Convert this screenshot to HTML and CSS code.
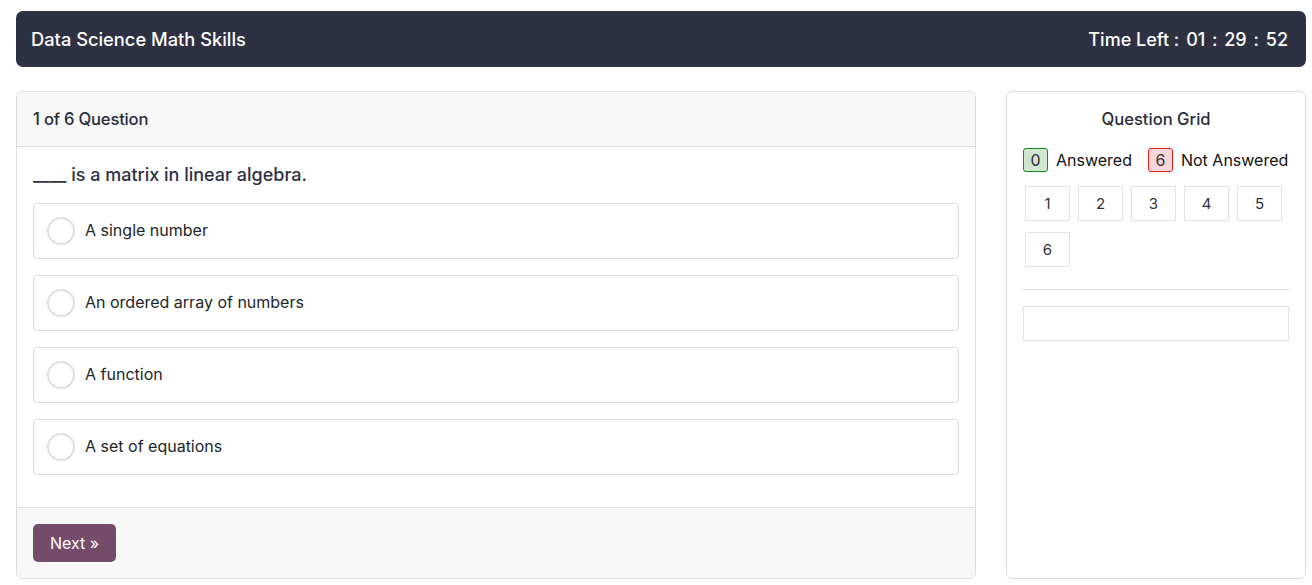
FILE: index.html
```html
<!DOCTYPE html>
<html lang="en">
<head>
  <meta charset="UTF-8">
  <title>Data Science Math Skills</title>
  <link rel="stylesheet" href="styles.css">
</head>
<body>
  <div class="topbar">
    <div class="quiz-title">Data Science Math Skills</div>
    <div class="timer">Time Left : <span>01</span> : <span>29</span> : <span>52</span></div>
  </div>

  <div class="layout">
    <div class="card quiz-card">
      <div class="card-header">1 of 6 Question</div>
      <div class="card-body">
        <div class="question-text">____ is a matrix in linear algebra.</div>
        <label class="option"><span class="radio"></span>A single number</label>
        <label class="option"><span class="radio"></span>An ordered array of numbers</label>
        <label class="option"><span class="radio"></span>A function</label>
        <label class="option"><span class="radio"></span>A set of equations</label>
      </div>
      <div class="card-footer">
        <button class="next-btn">Next &raquo;</button>
      </div>
    </div>

    <div class="card grid-card">
      <div class="grid-title">Question Grid</div>
      <div class="legend">
        <span class="badge answered">0</span> Answered
        <span class="badge not-answered">6</span> Not Answered
      </div>
      <div class="q-grid">
        <button>1</button>
        <button>2</button>
        <button>3</button>
        <button>4</button>
        <button>5</button>
        <button>6</button>
      </div>
      <hr class="divider">
      <div class="empty-box"></div>
    </div>
  </div>
</body>
</html>
```

FILE: styles.css
```css
* { box-sizing: border-box; }
body {
  margin: 0;
  padding: 11px 6px 0 16px;
  font-family: Inter, "Noto Sans", Arial, sans-serif;
  background: #fff;
  color: #212529;
}
.topbar {
  display: flex;
  justify-content: space-between;
  align-items: center;
  height: 56px;
  padding: 0 15px;
  background: #2e3142;
  border-radius: 7px;
  color: #fff;
  font-size: 18.3px;
  font-weight: 500;
}
.timer { font-size: 18px; padding-right: 1px; }
.timer span { margin: 0 2px; }
.layout {
  display: grid;
  grid-template-columns: 1fr 300px;
  gap: 30px;
  margin-top: 24px;
}
.card {
  border: 1px solid #dcdcdc;
  border-radius: 6px;
  background: #fff;
  height: 488px;
}
.quiz-card { display: flex; flex-direction: column; overflow: hidden; }
.card-header {
  height: 55px;
  line-height: 54px;
  padding: 0 16px;
  background: #f7f7f7;
  border-bottom: 1px solid #dcdcdc;
  font-size: 16.6px;
  font-weight: 500;
  color: #2a2d3a;
  letter-spacing: -0.2px;
}
.card-body { flex: 1; padding: 16px; }
.question-text {
  font-size: 18px;
  font-weight: 500;
  line-height: 24px;
  color: #2e3142;
  margin-bottom: 16px;
}
.option {
  display: flex;
  align-items: center;
  height: 56px;
  padding: 0 13px 2px;
  border: 1px solid #dcdcdc;
  border-radius: 4px;
  margin-bottom: 16px;
  font-size: 16px;
  color: #212529;
  cursor: pointer;
}
.radio {
  width: 28px;
  height: 28px;
  margin-top: 2px;
  border: 2px solid #dedede;
  border-radius: 50%;
  margin-right: 10px;
}
.card-footer {
  height: 72px;
  display: flex;
  align-items: center;
  padding: 0 16px;
  background: #f7f7f7;
  border-top: 1px solid #dcdcdc;
}
.next-btn {
  height: 38px;
  padding: 0 17px;
  background: #744b69;
  color: #fff;
  border: none;
  border-radius: 5px;
  font-family: inherit;
  font-size: 16px;
  cursor: pointer;
}
.grid-card { padding: 14px 16px; }
.grid-title {
  text-align: center;
  font-size: 16.6px;
  font-weight: 500;
  line-height: 26px;
  color: #2a2d3a;
}
.legend {
  display: flex;
  align-items: center;
  margin-top: 16px;
  font-size: 16px;
  color: #111;
  white-space: nowrap;
}
.badge {
  display: inline-block;
  width: 25px;
  height: 24px;
  line-height: 22px;
  text-align: center;
  border-radius: 3px;
  margin-right: 8px;
  color: #333;
}
.badge.answered { background: #cfe6cf; border: 1px solid #1e8a1e; }
.badge.not-answered { background: #f8d7da; border: 1px solid #e81f1f; margin-left: 16px; }
.q-grid {
  display: flex;
  flex-wrap: wrap;
  gap: 11px 8px;
  margin-top: 14px;
  padding-left: 2px;
}
.q-grid button {
  width: 45px;
  height: 35px;
  background: #fff;
  border: 1px solid #e3e3e3;
  font-family: inherit;
  font-size: 15px;
  color: #333;
  cursor: pointer;
}
.divider {
  border: none;
  border-top: 1px solid #dedede;
  margin: 22px 0 16px;
}
.empty-box {
  height: 35px;
  border: 1px solid #e3e3e3;
}
```
